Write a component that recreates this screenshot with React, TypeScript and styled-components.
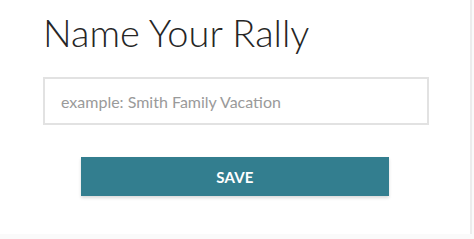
import React from 'react';
import styled, { createGlobalStyle } from 'styled-components';

const GlobalStyle = createGlobalStyle`
    html, body {
        margin: 0;
        padding: 0;
        background: #fafafa;
    }
    * {
        box-sizing: border-box;
    }
`;

const Card = styled.div`
    width: 472px;
    height: 234px;
    background: white;
    border-right: 2px solid #ececec;
    padding: 11px 0 0 43px;
    font-family: Lato, "Open Sans", sans-serif;
`;

const Title = styled.h1`
    margin: 0;
    font-size: 38px;
    font-weight: 300;
    line-height: 43px;
    color: #262626;
`;

const NameInput = styled.input`
    display: block;
    margin-top: 23px;
    width: 386px;
    height: 48px;
    border: 2px solid #e2e2e2;
    padding: 0 16px;
    font-family: Lato, "Open Sans", sans-serif;
    font-size: 16px;
    color: #333;
    outline: none;
    &::placeholder {
        color: #9a9a9a;
    }
`;

const SaveButton = styled.button`
    display: block;
    margin: 32px 0 0 38px;
    width: 308px;
    height: 39px;
    border: none;
    background: #337e8f;
    color: white;
    font-family: Lato, "Open Sans", sans-serif;
    font-weight: 700;
    font-size: 15px;
    letter-spacing: 0.2px;
    box-shadow: 0px 2px 3px rgba(0,0,0,0.15);
    cursor: pointer;
`;

const App = () => {
    return (
        <>
            <GlobalStyle/>
            <Card>
                <Title>Name Your Rally</Title>
                <NameInput placeholder="example: Smith Family Vacation"/>
                <SaveButton>SAVE</SaveButton>
            </Card>
        </>
    );
};

export default App;
